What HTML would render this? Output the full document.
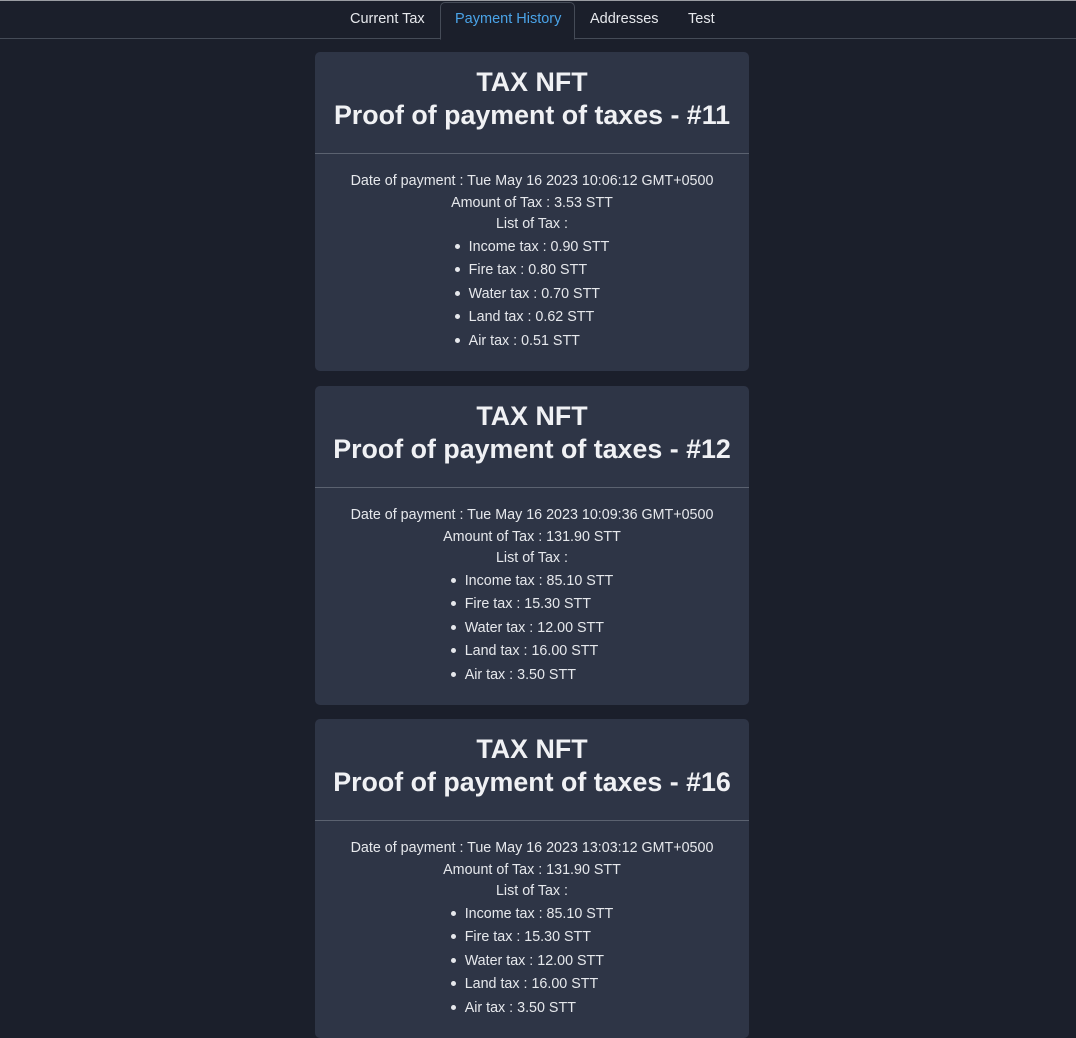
<!DOCTYPE html>
<html><head><meta charset="utf-8"><style>
*{box-sizing:border-box;margin:0;padding:0}
html,body{width:1076px;height:939px;overflow:hidden}
body{background:#1b1f2b;font-family:"Liberation Sans",sans-serif;color:#e6e8ec;border-top:1px solid #9a9ca2}
.nav{height:38px;border-bottom:1px solid #454b57;position:relative}
.tab{position:absolute;top:1px;height:37px;line-height:34px;font-size:14.5px;color:#e6e8ec;white-space:nowrap}
.tab.active{color:#4aa3e8;border:1px solid #454b57;border-bottom:1px solid #1b1f2b;border-radius:5px 5px 0 0;background:#1b1f2b;height:38px;padding:0 14px;line-height:32px}
.card{position:absolute;left:315px;width:434px;background:#2e3546;border-radius:5px}
.hd{height:102px;border-bottom:1px solid #5b6270;text-align:center;font-weight:bold;font-size:26.8px;line-height:33px;padding-top:14px;color:#f0f1f4;white-space:nowrap}
.bd{text-align:center;font-size:14.3px;line-height:21.5px;padding-top:17px}
ul{list-style:none;display:inline-block;text-align:left;margin-top:0}
li{line-height:23.5px;position:relative;padding-left:14px}
li:before{content:"";position:absolute;left:0;top:8px;width:5px;height:5px;border-radius:50%;background:#e6e8ec}
</style></head><body>
<div class="nav">
<span class="tab" style="left:350px">Current Tax</span>
<span class="tab active" style="left:440px;width:135px">Payment History</span>
<span class="tab" style="left:590px">Addresses</span>
<span class="tab" style="left:688px">Test</span>
</div>
<div class="card" style="top:52px;height:319px">
<div class="hd">TAX NFT<br>Proof of payment of taxes - #11</div>
<div class="bd">Date of payment : Tue May 16 2023 10:06:12 GMT+0500<br>Amount of Tax : 3.53 STT<br>List of Tax :<br>
<ul><li>Income tax : 0.90 STT</li><li>Fire tax : 0.80 STT</li><li>Water tax : 0.70 STT</li><li>Land tax : 0.62 STT</li><li>Air tax : 0.51 STT</li></ul></div></div>
<div class="card" style="top:386px;height:319px">
<div class="hd">TAX NFT<br>Proof of payment of taxes - #12</div>
<div class="bd">Date of payment : Tue May 16 2023 10:09:36 GMT+0500<br>Amount of Tax : 131.90 STT<br>List of Tax :<br>
<ul><li>Income tax : 85.10 STT</li><li>Fire tax : 15.30 STT</li><li>Water tax : 12.00 STT</li><li>Land tax : 16.00 STT</li><li>Air tax : 3.50 STT</li></ul></div></div>
<div class="card" style="top:719px;height:319px">
<div class="hd">TAX NFT<br>Proof of payment of taxes - #16</div>
<div class="bd">Date of payment : Tue May 16 2023 13:03:12 GMT+0500<br>Amount of Tax : 131.90 STT<br>List of Tax :<br>
<ul><li>Income tax : 85.10 STT</li><li>Fire tax : 15.30 STT</li><li>Water tax : 12.00 STT</li><li>Land tax : 16.00 STT</li><li>Air tax : 3.50 STT</li></ul></div></div>
</body></html>
